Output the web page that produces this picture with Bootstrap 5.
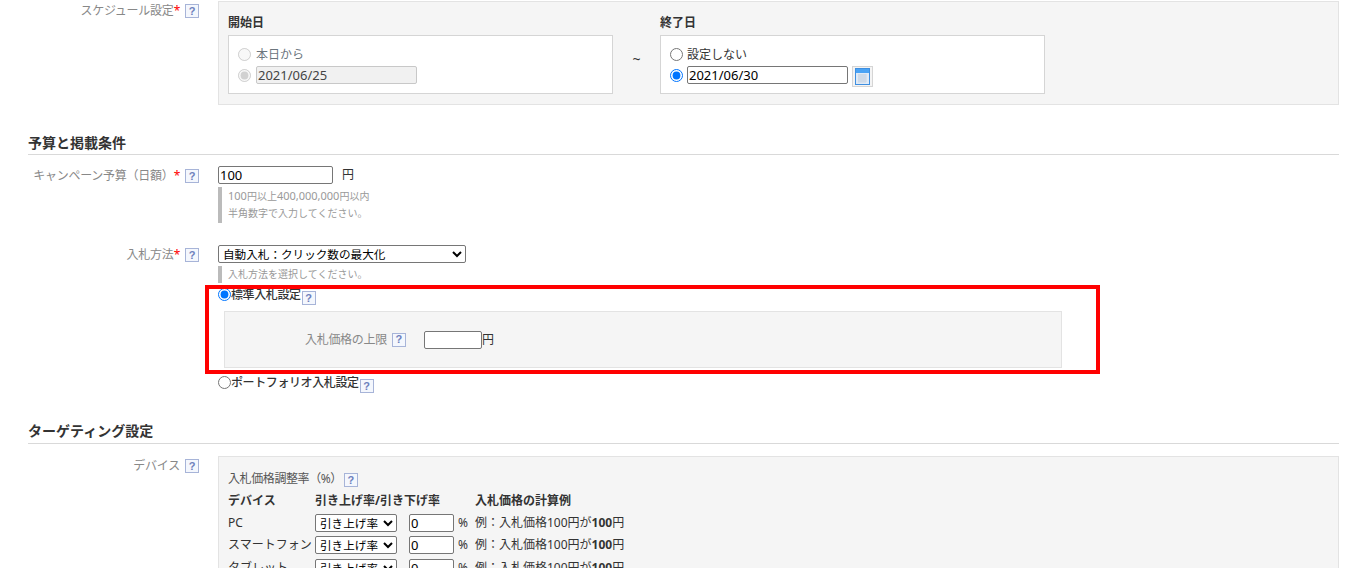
<!DOCTYPE html>
<html lang="ja">
<head>
  <meta charset="UTF-8">
  <title>キャンペーン設定</title>
  <meta name="viewport" content="width=device-width, initial-scale=1">
  <link href="https://cdn.jsdelivr.net/npm/bootstrap@5.3.3/dist/css/bootstrap.min.css" rel="stylesheet">
  <style>
    html, body { height: 568px; overflow: hidden; }
    body { font-family: "Noto Sans", "Noto Sans CJK JP", sans-serif; font-size: 12px; line-height: 18px; color: #333; background: #fff; }
    .page { padding: 1px 10px 0 28px; }
    .lbl { width: 190px; flex: none; display: flex; justify-content: flex-end; align-items: flex-start; gap: 5px; color: #888; padding-right: 19px; letter-spacing: -.25px; }
    .lbl > span:first-child { padding-top: 1px; }
    .lbl .req { color: #f00; }
    .cell { flex: 1; min-width: 0; }
    .hlp { flex: none; display: inline-flex; width: 14px; height: 14px; margin-top: 3px; align-items: center; justify-content: center; background: #f4f7fd; border: 1px solid #a7b4d8; color: #6d80bc; font: bold 11px/1 "Liberation Sans", sans-serif; letter-spacing: 0; }
    .well-box { background: #f5f5f5; border: 1px solid #e3e3e3; }
    .sched { padding: 10px 9px; }
    .sched-col { width: 385px; }
    .sched-head { font-weight: 700; line-height: 22px; margin-bottom: 1px; }
    .sched-box { height: 59px; background: #fff; border: 1px solid #d5d5d5; padding: 9px; }
    .sched-line { display: flex; align-items: center; height: 18px; gap: 4px; }
    .sched-line > span:not(.cal) { padding-top: 2px; }
    .sched-start .sched-line { gap: 5px; }
    .sched-line + .sched-line { margin-top: 3px; }
    .tilde { width: 47px; text-align: center; padding-top: 38px; font-size: 14px; }
    input[type=radio] { margin: 0; width: 13px; height: 13px; flex: none; }
    .txt { height: 18px; padding: 0 1px; border: 1px solid #767676; border-radius: 2px; font: inherit; font-size: 13px; color: #000; background: #fff; }
    .txt:disabled { background: #f1f1f1; border-color: #c8c8c8; color: #444; }
    .w-date { width: 161px; }
    .cal { width: 21px; height: 21px; flex: none; margin-top: 3px; background: #f4f4f4; border: 1px solid #d5d5d5; display: flex; align-items: center; justify-content: center; }
    .sec-head { margin: 28px 0 11px; padding-bottom: 1px; font-size: 14px; font-weight: 700; line-height: 20px; border-bottom: 1px solid #d9d9d9; color: #333; }
    .sec-two { margin: 29px 0 12px; padding-bottom: 2px; }
    .w-budget { width: 115px; }
    .unit { margin-left: 9px; }
    .note { margin-top: 3px; border-left: 4px solid #bbb; padding: 1px 0 1px 6px; font-size: 10px; line-height: 17px; color: #999; }
    .lat { font-size: 11px; line-height: 1; }
    .pick { width: 248px; height: 18px; padding: 0; border: 1px solid #767676; border-radius: 2px; font: inherit; font-size: 11.6px; color: #000; background: #fff; display: block; }
    .bid-row { margin-top: 22px; }
    .note-one { padding: 0 0 0 6px; }
    .bid-wrap { margin-top: 3px; padding-bottom: 6px; }
    .red-frame { position: absolute; left: -13px; top: -1px; width: 895px; height: 89px; border: 4px solid #f00; pointer-events: none; }
    .opt { display: flex; align-items: flex-start; height: 18px; font-weight: 500; letter-spacing: -.4px; }
    .opt input { margin-top: 2px; }
    .opt .hlp { margin-left: 1px; margin-top: 5px; }
    .limit { margin: 7px 0 0 6px; width: 838px; height: 57px; padding-left: 80px; display: flex; align-items: center; color: #888; letter-spacing: -.3px; }
    .limit .hlp { margin: 0 0 0 5px; }
    .w-limit { width: 58px; margin-left: 18px; }
    .limit-unit { color: #333; }
    .device { height: 200px; padding: 13px 9px; }
    .device-title { color: #555; display: flex; gap: 2px; height: 20px; letter-spacing: -.4px; }
    .adj-tbl th, .adj-tbl td { padding: 0; height: 22.5px; font-weight: 400; white-space: nowrap; vertical-align: middle; }
    .adj-tbl th { font-weight: 700; height: 21.5px; }
    .adj-tbl b { font-weight: 700; }
    .c-dev { width: 87px; }
    .c-rate { width: 160px; }
    .pick-rate { width: 82px; }
    .w-rate { width: 45px; margin-left: 12px; }
    .pct { margin-left: 4px; }
  </style>
</head>
<body>
  <div class="page">
    <div class="d-flex">
      <div class="lbl"><span>スケジュール設定<span class="req">*</span></span><span class="hlp">?</span></div>
      <div class="cell well-box sched d-flex">
        <div class="sched-col sched-start">
          <div class="sched-head">開始日</div>
          <div class="sched-box">
            <div class="sched-line"><input type="radio" name="st" disabled><span class="text-secondary">本日から</span></div>
            <div class="sched-line"><input type="radio" name="st" checked disabled><input class="txt w-date" type="text" value="2021/06/25" disabled></div>
          </div>
        </div>
        <div class="tilde">~</div>
        <div class="sched-col">
          <div class="sched-head">終了日</div>
          <div class="sched-box">
            <div class="sched-line"><input type="radio" name="en"><span>設定しない</span></div>
            <div class="sched-line"><input type="radio" name="en" checked><input class="txt w-date" type="text" value="2021/06/30">
              <span class="cal"><svg width="15" height="17" viewBox="0 0 15 17"><rect x=".5" y=".5" width="14" height="16" fill="#dfeaf7" stroke="#3f8fe0"/><rect x="1" y="1" width="13" height="4" fill="#4aa3f5"/><path d="M3 7h9M3 9h9M3 11h9M3 13h9M4 6v9M6 6v9M8 6v9M10 6v9" stroke="#c3cfdc" stroke-width=".7"/></svg></span>
            </div>
          </div>
        </div>
      </div>
    </div>

    <div class="sec-head">予算と掲載条件</div>
    <div class="d-flex">
      <div class="lbl"><span>キャンペーン予算（日額）<span class="req">*</span></span><span class="hlp">?</span></div>
      <div class="cell">
        <div class="d-flex align-items-center"><input class="txt w-budget" type="text" value="100"><span class="unit">円</span></div>
        <div class="note"><span class="lat">100</span>円以上<span class="lat">400,000,000</span>円以内<br>半角数字で入力してください。</div>
      </div>
    </div>

    <div class="d-flex bid-row">
      <div class="lbl"><span>入札方法<span class="req">*</span></span><span class="hlp">?</span></div>
      <div class="cell">
        <select class="pick"><option>自動入札：クリック数の最大化</option></select>
        <div class="note note-one">入札方法を選択してください。</div>
        <div class="bid-wrap position-relative">
          <label class="opt"><input type="radio" name="bid" checked><span>標準入札設定</span><span class="hlp">?</span></label>
          <div class="well-box limit">
            <span>入札価格の上限</span><span class="hlp">?</span>
            <input class="txt w-limit" type="text"><span class="limit-unit">円</span>
          </div>
          <div class="red-frame"></div>
        </div>
        <label class="opt"><input type="radio" name="bid"><span>ポートフォリオ入札設定</span><span class="hlp">?</span></label>
      </div>
    </div>

    <div class="sec-head sec-two">ターゲティング設定</div>
    <div class="d-flex">
      <div class="lbl"><span>デバイス</span><span class="hlp">?</span></div>
      <div class="cell well-box device">
        <div class="device-title"><span>入札価格調整率（%）</span><span class="hlp">?</span></div>
        <table class="adj-tbl">
          <thead>
            <tr><th class="c-dev">デバイス</th><th class="c-rate">引き上げ率/引き下げ率</th><th>入札価格の計算例</th></tr>
          </thead>
          <tbody>
            <tr><td>PC</td><td><div class="d-flex align-items-center"><select class="pick pick-rate"><option>引き上げ率</option></select><input class="txt w-rate" type="text" value="0"><span class="pct">%</span></div></td><td>例：入札価格100円が<b>100</b>円</td></tr>
            <tr><td>スマートフォン</td><td><div class="d-flex align-items-center"><select class="pick pick-rate"><option>引き上げ率</option></select><input class="txt w-rate" type="text" value="0"><span class="pct">%</span></div></td><td>例：入札価格100円が<b>100</b>円</td></tr>
            <tr><td>タブレット</td><td><div class="d-flex align-items-center"><select class="pick pick-rate"><option>引き上げ率</option></select><input class="txt w-rate" type="text" value="0"><span class="pct">%</span></div></td><td>例：入札価格100円が<b>100</b>円</td></tr>
          </tbody>
        </table>
      </div>
    </div>
  </div>
</body>
</html>
